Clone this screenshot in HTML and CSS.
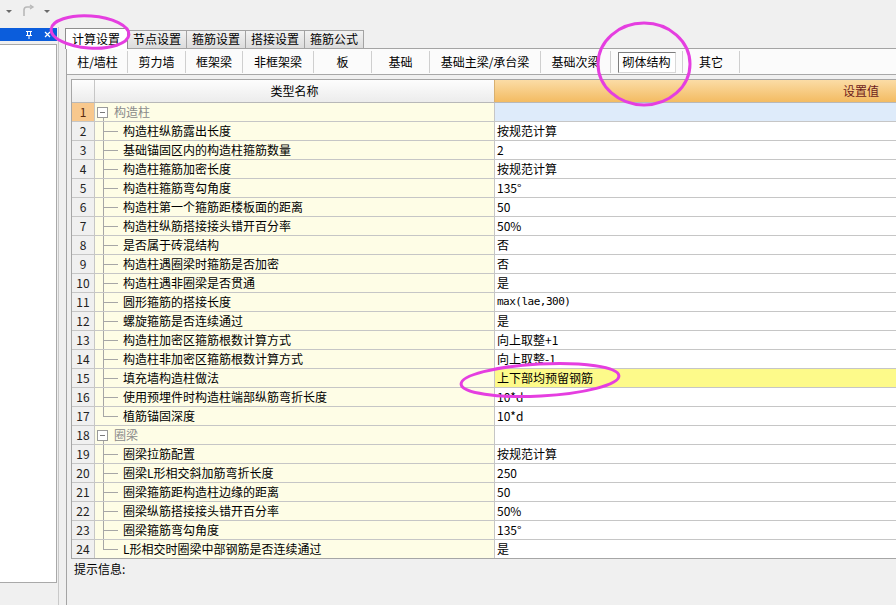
FILE: index.html
```html
<!DOCTYPE html>
<html lang="zh-CN">
<head>
<meta charset="utf-8">
<title>计算设置</title>
<link rel="stylesheet" href="styles.css">
</head>
<body>
<div class="app">
  <div class="toolbar">
    <svg class="tb-icon" width="8" height="8" viewBox="0 0 8 8"><path d="M1 3h6L4 6z" fill="#6a6a6a"/></svg>
    <svg class="tb-icon redo" width="14" height="14" viewBox="0 0 14 14"><path d="M3 12V6a3 3 0 0 1 3-3h5" fill="none" stroke="#b8b8b8" stroke-width="1.6"/><path d="M9 1l3 2-3 2" fill="none" stroke="#b8b8b8" stroke-width="1.4"/></svg>
    <svg class="tb-icon" width="8" height="8" viewBox="0 0 8 8"><path d="M1 3h6L4 6z" fill="#6a6a6a"/></svg>
  </div>
  <div class="main">
    <div class="side">
      <div class="side-title">
        <svg width="8" height="9" viewBox="0 0 8 9"><path d="M1 1.5h6M2.5 1.5v4h3v-4M1 5.5h6M4 5.5V9" fill="none" stroke="#fff" stroke-width="1"/></svg>
        <svg width="7" height="7" viewBox="0 0 7 7"><path d="M1 1l5 5M6 1L1 6" stroke="#fff" stroke-width="1.2"/></svg>
      </div>
      <div class="side-body"></div>
    </div>
    <div class="splitter"></div>
    <div class="content">
      <div class="tabs1">
        <div class="tab1 active">计算设置</div>
        <div class="tab1">节点设置</div>
        <div class="tab1">箍筋设置</div>
        <div class="tab1">搭接设置</div>
        <div class="tab1">箍筋公式</div>
      </div>
      <div class="panel">
        <div class="tabs2">
          <div class="tab2 w60">柱/墙柱</div>
          <div class="tab2 w58">剪力墙</div>
          <div class="tab2 w57">框架梁</div>
          <div class="tab2 w71">非框架梁</div>
          <div class="tab2 w58">板</div>
          <div class="tab2 w58">基础</div>
          <div class="tab2 w111">基础主梁/承台梁</div>
          <div class="tab2 w70">基础次梁</div>
          <div class="tab2 w72"><span class="sel">砌体结构</span></div>
          <div class="tab2 w57">其它</div>
        </div>
        <div class="grid">
          <div class="row head">
            <div class="c-num"></div>
            <div class="c-name">类型名称</div>
            <div class="c-val">设置值</div>
          </div>
          <div class="row current">
            <div class="c-num">1</div>
            <div class="c-name cat"><span class="box"></span>构造柱</div>
            <div class="c-val"></div>
          </div>
          <div class="row"><div class="c-num">2</div><div class="c-name child">构造柱纵筋露出长度</div><div class="c-val">按规范计算</div></div>
          <div class="row"><div class="c-num">3</div><div class="c-name child">基础锚固区内的构造柱箍筋数量</div><div class="c-val">2</div></div>
          <div class="row"><div class="c-num">4</div><div class="c-name child">构造柱箍筋加密长度</div><div class="c-val">按规范计算</div></div>
          <div class="row"><div class="c-num">5</div><div class="c-name child">构造柱箍筋弯勾角度</div><div class="c-val">135°</div></div>
          <div class="row"><div class="c-num">6</div><div class="c-name child">构造柱第一个箍筋距楼板面的距离</div><div class="c-val">50</div></div>
          <div class="row"><div class="c-num">7</div><div class="c-name child">构造柱纵筋搭接接头错开百分率</div><div class="c-val">50%</div></div>
          <div class="row"><div class="c-num">8</div><div class="c-name child">是否属于砖混结构</div><div class="c-val">否</div></div>
          <div class="row"><div class="c-num">9</div><div class="c-name child">构造柱遇圈梁时箍筋是否加密</div><div class="c-val">否</div></div>
          <div class="row"><div class="c-num">10</div><div class="c-name child">构造柱遇非圈梁是否贯通</div><div class="c-val">是</div></div>
          <div class="row"><div class="c-num">11</div><div class="c-name child">圆形箍筋的搭接长度</div><div class="c-val mono">max(lae,300)</div></div>
          <div class="row"><div class="c-num">12</div><div class="c-name child">螺旋箍筋是否连续通过</div><div class="c-val">是</div></div>
          <div class="row"><div class="c-num">13</div><div class="c-name child">构造柱加密区箍筋根数计算方式</div><div class="c-val">向上取整+1</div></div>
          <div class="row"><div class="c-num">14</div><div class="c-name child">构造柱非加密区箍筋根数计算方式</div><div class="c-val">向上取整-1</div></div>
          <div class="row"><div class="c-num">15</div><div class="c-name child">填充墙构造柱做法</div><div class="c-val hl">上下部均预留钢筋</div></div>
          <div class="row"><div class="c-num">16</div><div class="c-name child">使用预埋件时构造柱端部纵筋弯折长度</div><div class="c-val">10*d</div></div>
          <div class="row"><div class="c-num">17</div><div class="c-name child last">植筋锚固深度</div><div class="c-val">10*d</div></div>
          <div class="row"><div class="c-num">18</div><div class="c-name cat"><span class="box"></span>圈梁</div><div class="c-val"></div></div>
          <div class="row"><div class="c-num">19</div><div class="c-name child">圈梁拉筋配置</div><div class="c-val">按规范计算</div></div>
          <div class="row"><div class="c-num">20</div><div class="c-name child">圈梁L形相交斜加筋弯折长度</div><div class="c-val">250</div></div>
          <div class="row"><div class="c-num">21</div><div class="c-name child">圈梁箍筋距构造柱边缘的距离</div><div class="c-val">50</div></div>
          <div class="row"><div class="c-num">22</div><div class="c-name child">圈梁纵筋搭接接头错开百分率</div><div class="c-val">50%</div></div>
          <div class="row"><div class="c-num">23</div><div class="c-name child">圈梁箍筋弯勾角度</div><div class="c-val">135°</div></div>
          <div class="row"><div class="c-num">24</div><div class="c-name child last">L形相交时圈梁中部钢筋是否连续通过</div><div class="c-val">是</div></div>
        </div>
        <div class="hint">提示信息:</div>
      </div>
    </div>
  </div>
</div>
<svg class="marks" width="896" height="605" viewBox="0 0 896 605">
  <ellipse cx="90" cy="32" rx="39" ry="16" transform="rotate(4 90 32)"/>
  <ellipse cx="644" cy="64" rx="46" ry="41"/>
  <ellipse cx="540" cy="380" rx="79" ry="16" transform="rotate(-3 540 380)"/>
</svg>
</body>
</html>
```

FILE: styles.css
```css
* { box-sizing: border-box; }
html, body { margin: 0; padding: 0; }
body {
  width: 896px;
  height: 605px;
  overflow: hidden;
  position: relative;
  background: #f0f0f0;
  font-family: "Noto Sans CJK SC", "Noto Sans", sans-serif;
  font-size: 12px;
  color: #000;
}
.app { display: flex; flex-direction: column; height: 605px; }

.toolbar {
  height: 27px;
  display: flex;
  align-items: center;
  padding: 0 0 6px 5px;
  gap: 6px;
}
.tb-icon.redo { margin: 0 2px; }

.main { flex: 1; display: flex; min-height: 0; }

.side { width: 57px; display: flex; flex-direction: column; padding-top: 1px; }
.side-title {
  height: 13px;
  background: #0b5ddc;
  display: flex;
  justify-content: flex-end;
  align-items: center;
  gap: 11px;
  padding-right: 6px;
}
.side-body {
  height: 539px;
  margin-top: 3px;
  background: #fff;
  border: 1px solid #a9a9a9;
  border-left: 0;
}

.splitter { width: 5px; margin-left: 1px; border-left: 1px solid #c9c9c9; }

.content { flex: 1; display: flex; flex-direction: column; min-width: 0; }

.tabs1 {
  height: 21px;
  display: flex;
  align-items: flex-end;
  padding-left: 2px;
}
.tab1 {
  height: 18px;
  padding: 0 5px;
  line-height: 16px;
  background: linear-gradient(#f2f2f2, #dcdcdc);
  border: 1px solid #a3a3a3;
  border-left: 0;
  border-bottom: 0;
  color: #000;
}
.tab1.active {
  height: 21px;
  margin-bottom: -1px;
  padding: 0 7px 0 6px;
  line-height: 20px;
  background: #fff;
  border: 1px solid #8e8e8e;
  border-bottom: 0;
  position: relative;
  z-index: 1;
}

.panel {
  flex: 1;
  margin-left: 3px;
  border-left: 1px solid #a4a4a4;
  border-top: 1px solid #a4a4a4;
  display: flex;
  flex-direction: column;
}

.tabs2 {
  height: 26px;
  display: flex;
  background: #fbfbfb;
  border-bottom: 1px solid #a8a8a8;
  padding-left: 1px;
}
.tab2 {
  flex: none;
  display: flex;
  align-items: center;
  justify-content: center;
  border-right: 1px solid #cfcfcf;
  margin: 2px 0 1px;
  line-height: 16px;
}
.w57 { width: 57px; } .w58 { width: 58px; } .w60 { width: 60px; }
.w70 { width: 70px; } .w71 { width: 71px; } .w72 { width: 72px; }
.w111 { width: 111px; }
.sel {
  width: 58px;
  height: 21px;
  display: flex;
  align-items: center;
  justify-content: center;
  background: #fff;
  border: 1px solid;
  border-color: #7d7d7d #d8d8d8 #d8d8d8 #7d7d7d;
}

.grid {
  margin: 4px 0 0 4px;
  border-top: 1px solid #a6a6a6;
  border-left: 1px solid #a6a6a6;
  border-bottom: 1px solid #a6a6a6;
}
.row {
  display: grid;
  grid-template-columns: 23px 400px 1fr;
  height: 19px;
  border-bottom: 1px solid #c6c6c6;
  line-height: 18px;
}
.row:last-child { border-bottom: 0; height: 18px; }
.c-num {
  background: #f0f0f0;
  border-right: 1px solid #c6c6c6;
  text-align: center;
  color: #222;
}
.c-name {
  background: #fefde6;
  border-right: 1px solid #c6c6c6;
  white-space: nowrap;
  overflow: hidden;
}
.c-val { background: #fff; padding-left: 2px; white-space: nowrap; }
.c-val.hl { background: #fdfa8a; }
.c-val.mono { font-family: "DejaVu Sans Mono", "Liberation Mono", monospace; font-size: 11px; letter-spacing: -0.5px; }

.row.head { height: 23px; line-height: 22px; border-bottom-color: #b8b8b8; }
.head .c-num, .head .c-name { background: linear-gradient(#fdfdfd, #ececec); }
.head .c-name { text-align: center; border-right-color: #d8b070; }
.head .c-val {
  background: linear-gradient(#fbdca6, #f3bb62);
  text-align: right;
  padding-right: 17px;
  color: #6e1c1c;
}

.current .c-num { background: #f8c88d; color: #5a2a10; }
.current .c-val { background: #deebfa; }

.cat {
  display: flex;
  align-items: center;
  color: #8a8a8a;
  background-image: linear-gradient(#a6a6a6, #a6a6a6);
  background-size: 1px 4px;
  background-position: 8px 14px;
  background-repeat: no-repeat;
}
.box {
  width: 11px;
  height: 11px;
  margin: 0 6px 0 2px;
  border: 1px solid #9a9a9a;
  background: linear-gradient(#7a7a7a, #7a7a7a) center / 5px 1px no-repeat, #fff;
}
.child {
  padding-left: 28px;
  background-image: linear-gradient(#a6a6a6, #a6a6a6), linear-gradient(#a6a6a6, #a6a6a6);
  background-size: 1px 100%, 15px 1px;
  background-position: 8px 0, 8px 9px;
  background-repeat: no-repeat;
}
.child.last { background-size: 1px 10px, 15px 1px; }

.hint { padding: 2px 0 0 7px; line-height: 16px; }

.marks {
  position: absolute;
  left: 0;
  top: 0;
  z-index: 10;
  pointer-events: none;
}
.marks ellipse { fill: none; stroke: #e53ee0; stroke-width: 3; }
```
